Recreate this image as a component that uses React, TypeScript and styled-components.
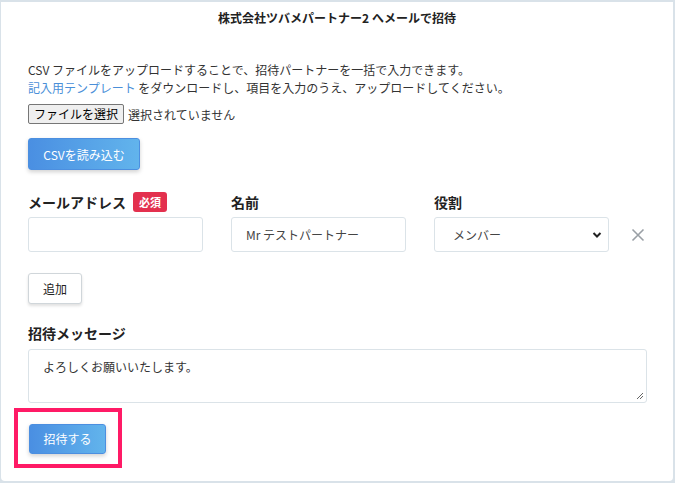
import React from "react";
import styled, { createGlobalStyle } from "styled-components";

const Global = createGlobalStyle`
  html, body { margin: 0; padding: 0; background: #d9e2e9; }
  body { font-family: "Noto Sans CJK JP", "Noto Sans", sans-serif; color: #333; }
  * { box-sizing: border-box; }
`;

const Page = styled.div`
  padding: 2px 2px 2px 1px;
  width: 675px;
  height: 483px;
`;

const Card = styled.div`
  background: #fff;
  border-radius: 0 0 4px 4px;
  height: 479px;
  display: flex;
  flex-direction: column;
`;

const Title = styled.h1`
  margin: 0;
  font-size: 12px;
  font-weight: bold;
  text-align: center;
  line-height: 18px;
  padding-top: 7px;
  color: #222;
`;

const Body = styled.div`
  padding: 34px 27px 0 27px;
  display: flex;
  flex-direction: column;
`;

const Lead = styled.p`
  margin: 0;
  font-size: 12px;
  line-height: 18px;
  color: #333;
`;

const Link = styled.a`
  color: #4a8fd8;
  text-decoration: none;
`;

const FileRow = styled.div`
  display: flex;
  align-items: center;
  gap: 4px;
  margin-top: 7px;
  font-size: 12px;
`;

const FileButton = styled.button`
  font-family: inherit;
  font-size: 12px;
  height: 20px;
  padding: 0 5px;
  background: #efefef;
  border: 1px solid #767676;
  border-radius: 2px;
  color: #000;
  line-height: 16px;
`;

const PrimaryButton = styled.button<{ $w: number; $h: number }>`
  font-family: inherit;
  width: ${(p) => p.$w}px;
  height: ${(p) => p.$h}px;
  font-size: 12px;
  color: #fff;
  border: 1px solid #4c8fe0;
  border-radius: 3px;
  background: linear-gradient(90deg, #4a8fe2 0%, #62b4ec 100%);
  box-shadow: 0 2px 4px rgba(0, 0, 0, 0.18);
  padding: 0;
`;

const CsvWrap = styled.div`
  margin-top: 14px;
`;

const Grid = styled.div`
  display: grid;
  grid-template-columns: 175px 175px 175px 39px;
  column-gap: 28px;
  margin-top: 20px;
  align-items: center;
`;

const Label = styled.div`
  font-size: 14px;
  font-weight: bold;
  line-height: 20px;
  height: 24px;
  display: flex;
  align-items: center;
  gap: 7px;
  color: #222;
`;

const Badge = styled.span`
  background: #e3304e;
  color: #fff;
  font-size: 11px;
  font-weight: bold;
  border-radius: 3px;
  padding: 0 6px;
  line-height: 20px;
  height: 20px;
`;

const Field = styled.div<{ $select?: boolean }>`
  height: 35px;
  border: 1px solid #dbe3e8;
  border-radius: 3px;
  background: #fff;
  font-size: 12px;
  padding: ${(p) => (p.$select ? "0 6px 0 18px" : "0 14px")};
  display: flex;
  align-items: center;
  justify-content: space-between;
  color: #444;
  margin-top: 3px;
`;

const Chevron = styled.svg`
  width: 10px;
  height: 10px;
`;

const Remove = styled.div`
  display: flex;
  align-items: center;
  margin-left: -6px;
  margin-top: 3px;
`;

const AddButton = styled.button`
  font-family: inherit;
  margin-top: 21px;
  width: 54px;
  height: 31px;
  font-size: 12px;
  background: #fff;
  border: 1px solid #d0d6da;
  border-radius: 3px;
  box-shadow: 0 2px 3px rgba(0, 0, 0, 0.12);
  color: #222;
  padding: 0;
`;

const MsgLabel = styled(Label)`
  margin-top: 17px;
`;

const TextArea = styled.div`
  position: relative;
  margin-top: 4px;
  width: 619px;
  height: 54px;
  border: 1px solid #dbe3e8;
  border-radius: 3px;
  font-size: 12px;
  padding: 8px 14px;
  color: #333;
`;

const Grip = styled.svg`
  position: absolute;
  right: 2px;
  bottom: 2px;
  width: 8px;
  height: 8px;
`;

const Highlight = styled.div`
  margin-top: 5px;
  margin-left: -14px;
  width: 108px;
  height: 60px;
  border: 4px solid #ff1a66;
  display: flex;
  align-items: center;
  padding-left: 11px;
  padding-top: 1px;
`;

export default function App() {
  return (
    <>
      <Global />
      <Page>
        <Card>
          <Title>株式会社ツバメパートナー2 へメールで招待</Title>
          <Body>
            <Lead>
              CSV ファイルをアップロードすることで、招待パートナーを一括で入力できます。
              <br />
              <Link href="#">記入用テンプレート</Link> をダウンロードし、項目を入力のうえ、アップロードしてください。
            </Lead>
            <FileRow>
              <FileButton>ファイルを選択</FileButton>
              <span>選択されていません</span>
            </FileRow>
            <CsvWrap>
              <PrimaryButton $w={112} $h={32}>CSVを読み込む</PrimaryButton>
            </CsvWrap>
            <Grid>
              <Label>
                メールアドレス<Badge>必須</Badge>
              </Label>
              <Label>名前</Label>
              <Label>役割</Label>
              <div />
              <Field />
              <Field>Mr テストパートナー</Field>
              <Field $select>
                <span>メンバー</span>
                <Chevron viewBox="0 0 10 10">
                  <path d="M1.5 3 L5 6.5 L8.5 3" fill="none" stroke="#222" strokeWidth="2" />
                </Chevron>
              </Field>
              <Remove>
                <svg width="14" height="14" viewBox="0 0 14 14">
                  <path d="M1.5 1.5 L12.5 12.5 M12.5 1.5 L1.5 12.5" stroke="#9aa0a6" strokeWidth="1.6" />
                </svg>
              </Remove>
            </Grid>
            <div>
              <AddButton>追加</AddButton>
            </div>
            <MsgLabel>招待メッセージ</MsgLabel>
            <TextArea>
              よろしくお願いいたします。
              <Grip viewBox="0 0 8 8">
                <path d="M7 1 L1 7 M7 4 L4 7" stroke="#666" strokeWidth="1" />
              </Grip>
            </TextArea>
            <Highlight>
              <PrimaryButton $w={77} $h={30}>招待する</PrimaryButton>
            </Highlight>
          </Body>
        </Card>
      </Page>
    </>
  );
}
